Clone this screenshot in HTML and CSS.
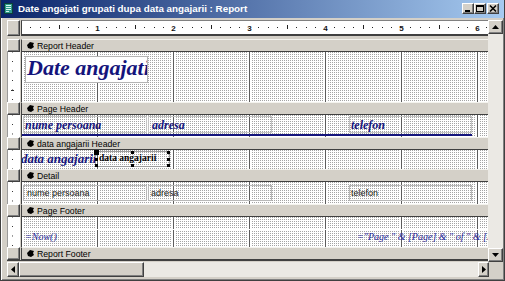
FILE: index.html
```html
<!DOCTYPE html>
<html lang="ro">
<head>
  <meta charset="UTF-8" />
  <title>Date angajati grupati dupa data angajarii : Report</title>
  <link rel="stylesheet" href="styles.css">
</head>
<body>
  <div class="window">

    <div class="titlebar">
      <svg class="app-icon" width="9" height="11" viewBox="0 0 9 11">
        <rect x="0.5" y="0.5" width="8" height="10" fill="#2f9c8c" stroke="#0c3f3a"/>
        <rect x="2" y="2" width="5" height="1" fill="#d8f4ee"/>
        <rect x="2" y="4" width="5" height="1" fill="#d8f4ee"/>
        <rect x="2" y="6" width="5" height="1" fill="#d8f4ee"/>
        <rect x="2" y="8" width="3" height="1" fill="#d8f4ee"/>
      </svg>
      <span class="title-text">Date angajati grupati dupa data angajarii : Report</span>
      <div class="caption-btns">
        <span class="cbtn raised"><svg width="10" height="9"><rect x="2" y="6" width="5" height="2" fill="#000"/></svg></span>
        <span class="cbtn raised"><svg width="10" height="9"><rect x="1.5" y="1.5" width="7" height="6" fill="none" stroke="#000"/><rect x="1" y="1" width="8" height="2" fill="#000"/></svg></span>
        <span class="cbtn raised close"><svg width="10" height="9"><path d="M2 1.5 L8 7.5 M8 1.5 L2 7.5" stroke="#000" stroke-width="1.6"/></svg></span>
      </div>
    </div>

    <div class="client">
      <div class="upper">
        <div class="designer">

          <div class="ruler-row">
            <div class="corner raised"></div>
            <div class="ruler">
              <svg width="466" height="13" viewBox="0 0 466 13">
                <defs>
                  <pattern id="ticks" x="-1" y="0" width="76" height="13" patternUnits="userSpaceOnUse">
                    <rect x="9" y="6" width="1" height="1" fill="#222"/>
                    <rect x="19" y="6" width="1" height="1" fill="#222"/>
                    <rect x="28" y="6" width="1" height="1" fill="#222"/>
                    <rect x="38" y="4" width="1" height="4" fill="#222"/>
                    <rect x="47" y="6" width="1" height="1" fill="#222"/>
                    <rect x="57" y="6" width="1" height="1" fill="#222"/>
                    <rect x="66" y="6" width="1" height="1" fill="#222"/>
                  </pattern>
                </defs>
                <rect width="466" height="13" fill="url(#ticks)"/>
                <g class="ruler-num">
                  <text x="75.5" y="9.5">1</text>
                  <text x="151.5" y="9.5">2</text>
                  <text x="227.5" y="9.5">3</text>
                  <text x="303.5" y="9.5">4</text>
                  <text x="379.5" y="9.5">5</text>
                  <text x="455.5" y="9.5">6</text>
                </g>
              </svg>
            </div>
          </div>

          <div class="sections">
            <!-- Report Header -->
            <div class="sel raised"></div>
            <div class="bar"><svg class="bar-ico" width="7" height="7"><path d="M0 3 L3 0 L7 1 L6 3 L7 5 L4 7 L1 6 Z" fill="#000"/></svg>Report Header</div>
            <div class="vruler"></div>
            <div class="area rh">
              <div class="title-label">Date angajati</div>
            </div>

            <!-- Page Header -->
            <div class="sel raised"></div>
            <div class="bar"><svg class="bar-ico" width="7" height="7"><path d="M0 3 L3 0 L7 1 L6 3 L7 5 L4 7 L1 6 Z" fill="#000"/></svg>Page Header</div>
            <div class="vruler"></div>
            <div class="area ph">
              <div class="hlabel lbl-nume">nume persoana</div>
              <div class="hlabel lbl-adresa">adresa</div>
              <div class="hlabel lbl-tel">telefon</div>
              <div class="ph-line"></div>
            </div>

            <!-- data angajarii Header -->
            <div class="sel raised"></div>
            <div class="bar"><svg class="bar-ico" width="7" height="7"><path d="M0 3 L3 0 L7 1 L6 3 L7 5 L4 7 L1 6 Z" fill="#000"/></svg>data angajarii Header</div>
            <div class="vruler"></div>
            <div class="area dah">
              <div class="group-label">data angajarii</div>
              <div class="group-box">data angajarii
                <span class="handle h-move"></span>
                <span class="handle h-tm"></span>
                <span class="handle h-tr"></span>
                <span class="handle h-ml"></span>
                <span class="handle h-mr"></span>
                <span class="handle h-bl"></span>
                <span class="handle h-bm"></span>
                <span class="handle h-br"></span>
              </div>
            </div>

            <!-- Detail -->
            <div class="sel raised"></div>
            <div class="bar"><svg class="bar-ico" width="7" height="7"><path d="M0 3 L3 0 L7 1 L6 3 L7 5 L4 7 L1 6 Z" fill="#000"/></svg>Detail</div>
            <div class="vruler"></div>
            <div class="area det">
              <div class="dbox box-nume">nume persoana</div>
              <div class="dbox box-adresa">adresa</div>
              <div class="dbox box-tel">telefon</div>
            </div>

            <!-- Page Footer -->
            <div class="sel raised"></div>
            <div class="bar"><svg class="bar-ico" width="7" height="7"><path d="M0 3 L3 0 L7 1 L6 3 L7 5 L4 7 L1 6 Z" fill="#000"/></svg>Page Footer</div>
            <div class="vruler"></div>
            <div class="area pf">
              <div class="pf-gap"></div>
              <div class="fbox box-now">=Now()</div>
              <div class="fbox box-page">="Page " &amp; [Page] &amp; " of " &amp; [Pages]</div>
            </div>

            <!-- Report Footer -->
            <div class="sel raised"></div>
            <div class="bar"><svg class="bar-ico" width="7" height="7"><path d="M0 3 L3 0 L7 1 L6 3 L7 5 L4 7 L1 6 Z" fill="#000"/></svg>Report Footer</div>
          </div>

        </div>

        <div class="vscroll">
          <div class="sbtn raised"><svg width="7" height="4"><path d="M3.5 0 L7 4 L0 4 Z" fill="#000"/></svg></div>
          <div class="strack"></div>
          <div class="sbtn raised"><svg width="7" height="4"><path d="M0 0 L7 0 L3.5 4 Z" fill="#000"/></svg></div>
        </div>
      </div>

      <div class="hscroll">
        <div class="hbtn raised"><svg width="4" height="7"><path d="M4 0 L4 7 L0 3.5 Z" fill="#000"/></svg></div>
        <div class="hthumb raised"></div>
        <div class="htrack"></div>
        <div class="hbtn hbtn-r raised"><svg width="4" height="7"><path d="M0 0 L4 3.5 L0 7 Z" fill="#000"/></svg></div>
        <div class="hcorner"></div>
      </div>
    </div>

  </div>
</body>
</html>
```

FILE: styles.css
```css
* {
  margin: 0;
  padding: 0;
  box-sizing: border-box;
}

body {
  width: 505px;
  height: 281px;
  overflow: hidden;
  background: #d4d0c8;
  font-family: "Liberation Sans", Arial, sans-serif;
}

.raised {
  background: #d4d0c8;
  border: 1px solid;
  border-color: #ffffff #404040 #404040 #ffffff;
  box-shadow: inset -1px -1px #808080;
}

.window {
  width: 505px;
  height: 281px;
  background: #d4d0c8;
  border: 1px solid;
  border-top: 0;
  border-color: #d4d0c8 #404040 #404040 #404040;
  box-shadow: inset 1px 0 #ffffff, inset -1px -1px #808080;
}

/* barre de titre */
.titlebar {
  height: 18px;
  display: flex;
  align-items: center;
  padding: 0 5px 1px 3px;
  background: linear-gradient(90deg, #0a246a, #a6caf0);
}

.app-icon { flex: none; }

.title-text {
  flex: 1;
  margin-left: 5px;
  color: #fff;
  font-weight: bold;
  font-size: 9.8px;
  white-space: nowrap;
}

.caption-btns {
  display: flex;
  align-items: center;
}

.cbtn {
  width: 12px;
  height: 11px;
  display: flex;
  justify-content: center;
  align-items: center;
}

.cbtn.close { margin-left: 1px; }

/* zone client */
.client {
  padding: 2px 1px 0 6px;
}

.upper {
  display: flex;
  height: 242px;
}

.designer {
  width: 481px;
  display: flex;
  flex-direction: column;
}

.ruler-row {
  display: flex;
  gap: 1px;
  height: 16px;
  margin-bottom: 3px;
}

.corner { width: 13px; }

.ruler {
  width: 467px;
  background: #fff;
  border-top: 1px solid #808080;
  border-left: 1px solid #404040;
  border-bottom: 2px solid #404040;
}

.ruler svg { display: block; }

.ruler-num text {
  font-family: "Liberation Sans", Arial, sans-serif;
  font-size: 8px;
  font-weight: bold;
  text-anchor: middle;
  fill: #111;
}

.sections {
  display: grid;
  grid-template-columns: 13px 467px;
  column-gap: 1px;
  border-bottom: 1px solid #404040;
}

.bar {
  height: 13px;
  display: flex;
  align-items: center;
  gap: 3px;
  padding-left: 5px;
  background: #d4d0c8;
  border-top: 1px solid #f4f3ee;
  border-bottom: 1px solid #404040;
  border-left: 1px solid #404040;
  font-size: 8.7px;
  color: #000;
  white-space: nowrap;
}

.bar-ico { flex: none; }

.vruler {
  background-color: #fff;
  background-image:
    linear-gradient(#333 1px, transparent 1px),
    linear-gradient(#333 1px, transparent 1px);
  background-size: 1px 9.5px, 3px 76px;
  background-position: 4px 9px, 3px 38px;
  background-repeat: repeat-y;
  border-left: 1px solid #9a9a9a;
}

/* grille de points + lignes des pouces */
.area {
  position: relative;
  overflow: hidden;
  border-left: 1px solid #404040;
  background:
    linear-gradient(90deg, #5c5c5c 1px, transparent 1px) 75px 0 / 76px 100% repeat-x,
    linear-gradient(90deg, #fff 5px, transparent 5px) 73px 0 / 76px 100% repeat-x,
    linear-gradient(90deg, transparent 1px, #fff 1px) 0 0 / 2px 2px,
    linear-gradient(transparent 1px, #fff 1px) 0 0 / 2px 2px,
    #a4a4a4;
}

.rh { height: 50px; }
.ph { height: 22px; }
.dah { height: 19px; }
.det { height: 22px; }
.pf { height: 30px; }

.title-label {
  position: absolute;
  left: 3px;
  top: 4px;
  width: 123px;
  height: 27px;
  padding-left: 1px;
  background: #fff;
  border: 1px solid #b4b4b4;
  overflow: hidden;
  white-space: nowrap;
  font-family: "Liberation Serif", "Times New Roman", serif;
  font-style: italic;
  font-weight: bold;
  font-size: 22px;
  line-height: 22px;
  color: #14147c;
}

.hlabel {
  position: absolute;
  top: 1px;
  height: 17px;
  border: 1px solid #c4c4c4;
  overflow: hidden;
  white-space: nowrap;
  font-family: "Liberation Serif", "Times New Roman", serif;
  font-style: italic;
  font-weight: bold;
  font-size: 12px;
  line-height: 16px;
  color: #14147c;
}

.lbl-nume { left: 1px; width: 124px; padding-left: 1px; }
.lbl-adresa { left: 126px; width: 124px; padding-left: 3px; }
.lbl-tel { left: 327px; width: 123px; padding-left: 1px; }

.ph-line {
  position: absolute;
  left: 0;
  top: 19px;
  width: 450px;
  height: 2px;
  background: #14147c;
}

.group-label {
  position: absolute;
  left: -1px;
  top: 0;
  white-space: nowrap;
  font-family: "Liberation Serif", "Times New Roman", serif;
  font-style: italic;
  font-weight: bold;
  font-size: 13px;
  line-height: 17px;
  color: #14147c;
}

.group-box {
  position: absolute;
  left: 73px;
  top: 1px;
  width: 75px;
  height: 16px;
  padding-left: 3px;
  border: 1px solid #9c9c9c;
  white-space: nowrap;
  font-family: "Liberation Serif", "Times New Roman", serif;
  font-weight: bold;
  font-size: 9.5px;
  line-height: 13px;
  color: #000;
}

.handle {
  position: absolute;
  width: 3px;
  height: 3px;
  background: #000;
}

.h-move { left: -2px; top: -2px; width: 5px; height: 5px; }
.h-tm { left: 35px; top: -1px; }
.h-tr { right: -1px; top: -1px; }
.h-ml { left: -1px; top: 6px; }
.h-mr { right: -1px; top: 6px; }
.h-bl { left: -1px; bottom: -1px; }
.h-bm { left: 35px; bottom: -1px; }
.h-br { right: -1px; bottom: -1px; }

.dbox {
  position: absolute;
  top: 3px;
  height: 16px;
  border: 1px solid #b8b8b8;
  overflow: hidden;
  white-space: nowrap;
  font-size: 9px;
  line-height: 14px;
  color: #222;
}

.box-nume { left: 1px; width: 124px; padding-left: 3px; }
.box-adresa { left: 126px; width: 124px; padding-left: 2px; }
.box-tel { left: 327px; width: 123px; padding-left: 1px; }

.pf-gap {
  position: absolute;
  left: 0;
  top: 12px;
  width: 100%;
  height: 1px;
  background: #fff;
}

.fbox {
  position: absolute;
  top: 13px;
  height: 14px;
  white-space: nowrap;
  font-family: "Liberation Serif", "Times New Roman", serif;
  font-style: italic;
  font-size: 10px;
  line-height: 14px;
  color: #2a2a9a;
}

.box-now { left: 1px; width: 74px; padding-left: 2px; }
.box-page { left: 335px; width: 200px; }

/* barres de défilement */
.vscroll {
  width: 15px;
  display: flex;
  flex-direction: column;
  background: #ebe9e4;
}

.sbtn {
  height: 14px;
  display: flex;
  justify-content: center;
  align-items: center;
}

.strack { flex: 1; }

.hscroll {
  display: flex;
  height: 15px;
}

.hbtn {
  width: 12px;
  display: flex;
  justify-content: center;
  align-items: center;
}

.hbtn-r { width: 11px; }

.hthumb { width: 125px; }

.htrack {
  flex: 1;
  background: #ebe9e4;
}

.hcorner {
  width: 14px;
  background: #d4d0c8;
}
```
